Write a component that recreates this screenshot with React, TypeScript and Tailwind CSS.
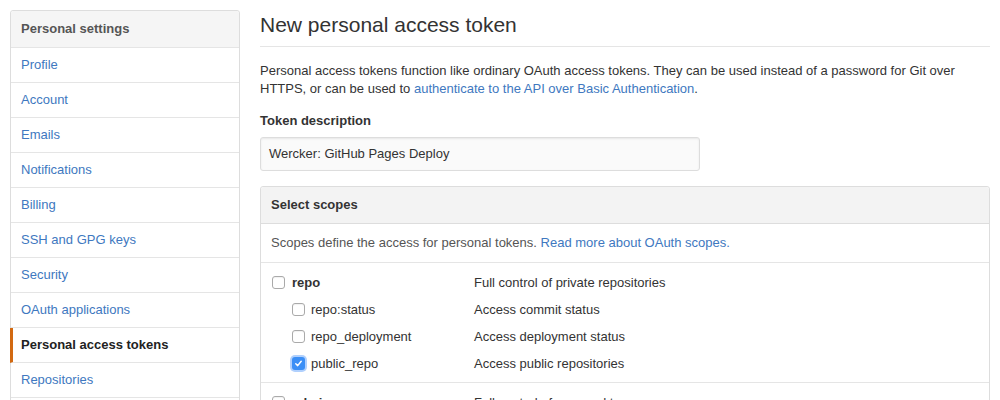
import React from "react";

const items = [
  "Profile",
  "Account",
  "Emails",
  "Notifications",
  "Billing",
  "SSH and GPG keys",
  "Security",
  "OAuth applications",
  "Personal access tokens",
  "Repositories",
  "Organizations",
];

function Box({ checked }: { checked?: boolean }) {
  if (checked) {
    return (
      <span className="flex h-[13px] w-[13px] shrink-0 items-center justify-center rounded-[3px] bg-[#3b8ff6] shadow-[0_0_0_2px_rgba(80,150,250,0.45)]">
        <svg width="9" height="9" viewBox="0 0 9 9">
          <path d="M1.8 4.8 L3.7 6.6 L7.2 2.3" fill="none" stroke="#fff" strokeWidth="1.5" strokeLinecap="round" strokeLinejoin="round" />
        </svg>
      </span>
    );
  }
  return <span className="block h-[13px] w-[13px] shrink-0 rounded-[3px] border border-[#aaa] bg-white shadow-[inset_0_1px_1px_rgba(0,0,0,0.06)]" />;
}

function Row({ label, desc, sub, bold, checked }: { label: string; desc: string; sub?: boolean; bold?: boolean; checked?: boolean }) {
  return (
    <div className="flex h-[27px] items-center">
      <div className={`flex w-[213px] items-center ${sub ? "pl-[31px]" : "pl-[11px]"}`}>
        <Box checked={checked} />
        <span className={`${sub ? "ml-[6px]" : "ml-[7px] font-bold"} text-[#333]`}>{label}</span>
      </div>
      <div className="text-[#333]">{desc}</div>
    </div>
  );
}

export default function App() {
  return (
    <div className="h-[400px] w-[1000px] overflow-hidden bg-white text-[13px] text-[#333] font-['Liberation_Sans',Arial,sans-serif]">
      <div className="flex pl-[10px] pt-[10px]">
        <div className="w-[230px] shrink-0 self-start rounded-[3px] border border-[#ddd]">
          <div className="flex h-[37px] items-center rounded-t-[3px] border-b border-[#e5e5e5] bg-[#f5f5f5] pl-[10px] font-bold text-[#555]">
            Personal settings
          </div>
          {items.map((it) => {
            const sel = it === "Personal access tokens";
            return (
              <div
                key={it}
                className={`flex h-[35px] items-center border-b border-[#e5e5e5] ${
                  sel ? "-ml-px border-l-[3px] border-l-[#d26911] pl-[8px] font-bold text-[#222]" : "pl-[10px] text-[#4078c0]"
                }`}
              >
                {it}
              </div>
            );
          })}
        </div>

        <div className="ml-[20px] w-[730px]">
          <div className="border-b border-[#e5e5e5] pb-[7px] text-[21px] leading-[29px] text-[#333]">
            New personal access token
          </div>
          <p className="mt-[15px] leading-[18px]">
            Personal access tokens function like ordinary OAuth access tokens. They can be used instead of a password for Git over HTTPS, or can be used to{" "}
            <span className="text-[#4078c0]">authenticate to the API over Basic Authentication</span>.
          </p>
          <div className="mt-[14px] font-bold leading-[18px]">Token description</div>
          <div className="mt-[7px] flex h-[34px] w-[440px] items-center rounded-[3px] border border-[#ddd] bg-[#fafafa] pl-[8px] shadow-[inset_0_1px_2px_rgba(0,0,0,0.075)]">
            Wercker: GitHub Pages Deploy
          </div>

          <div className="mt-[15px] rounded-[3px] border border-[#ddd]">
            <div className="flex h-[37px] items-center rounded-t-[3px] border-b border-[#ddd] bg-[#f3f3f3] pl-[10px] font-bold text-[#333]">
              Select scopes
            </div>
            <div className="flex h-[39px] items-center border-b border-[#e5e5e5] pl-[10px] text-[#555]">
              Scopes define the access for personal tokens.&nbsp;
              <span className="text-[#4078c0]">Read more about OAuth scopes.</span>
            </div>
            <div className="border-b border-[#e5e5e5] pb-[5px] pt-[6px]">
              <Row label="repo" desc="Full control of private repositories" bold />
              <Row label="repo:status" desc="Access commit status" sub />
              <Row label="repo_deployment" desc="Access deployment status" sub />
              <Row label="public_repo" desc="Access public repositories" sub checked />
            </div>
            <div className="pb-[5px] pt-[6px]">
              <Row label="admin:org" desc="Full control of orgs and teams" bold />
              <Row label="write:org" desc="Read and write org and team membership" sub />
            </div>
          </div>
        </div>
      </div>
    </div>
  );
}
